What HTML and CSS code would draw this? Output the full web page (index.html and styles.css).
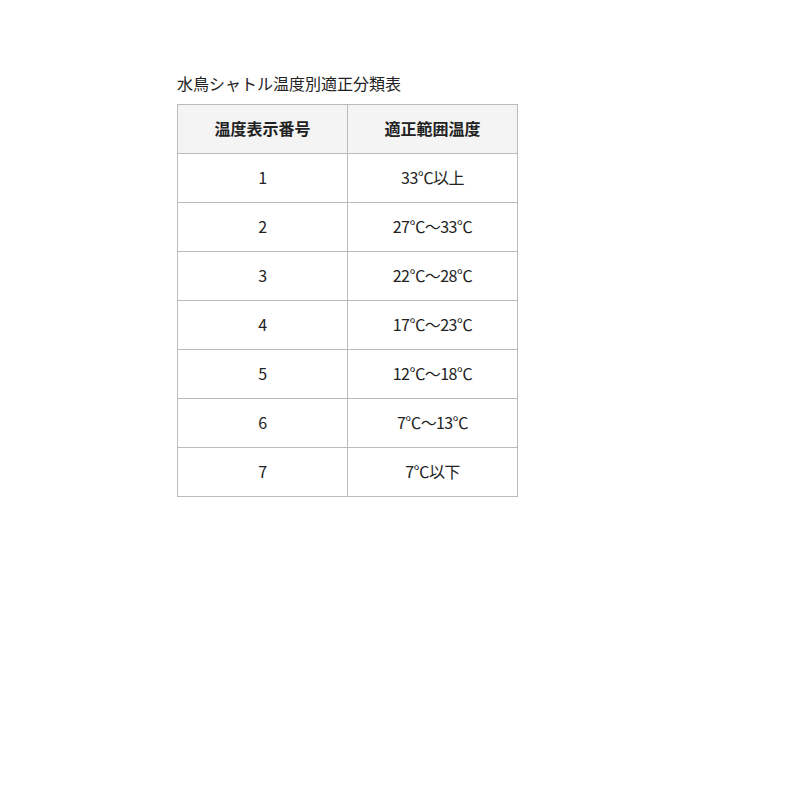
FILE: index.html
```html
<!DOCTYPE html>
<html lang="ja">
<head>
<meta charset="utf-8">
<link rel="stylesheet" href="styles.css">
</head>
<body>
<div class="wrap">
  <p class="title">水鳥シャトル温度別適正分類表</p>
  <table class="temp">
    <thead>
      <tr><th>温度表示番号</th><th>適正範囲温度</th></tr>
    </thead>
    <tbody>
      <tr><td>1</td><td>33℃以上</td></tr>
      <tr><td>2</td><td>27℃～33℃</td></tr>
      <tr><td>3</td><td>22℃～28℃</td></tr>
      <tr><td>4</td><td>17℃～23℃</td></tr>
      <tr><td>5</td><td>12℃～18℃</td></tr>
      <tr><td>6</td><td>7℃～13℃</td></tr>
      <tr><td>7</td><td>7℃以下</td></tr>
    </tbody>
  </table>
</div>
</body>
</html>
```

FILE: styles.css
```css
html, body {
  margin: 0;
  padding: 0;
  background: #fff;
}
body {
  font-family: "Noto Sans CJK JP", "Noto Sans", sans-serif;
  color: #222;
}
.wrap {
  padding: 72px 0 0 177px;
}
.title {
  margin: 0 0 10px 0;
  font-size: 16px;
  line-height: 22px;
  color: #222;
}
.temp {
  border-collapse: collapse;
  width: 341px;
  table-layout: fixed;
  font-size: 16px;
}
.temp th, .temp td {
  border: 1px solid #bbb;
  height: 49px;
  padding: 0 0 2px 0;
  box-sizing: border-box;
  text-align: center;
  vertical-align: middle;
  line-height: 20px;
}
.temp td {
  letter-spacing: -0.6px;
}
.temp th {
  background: #f4f4f4;
  font-weight: bold;
}
```
